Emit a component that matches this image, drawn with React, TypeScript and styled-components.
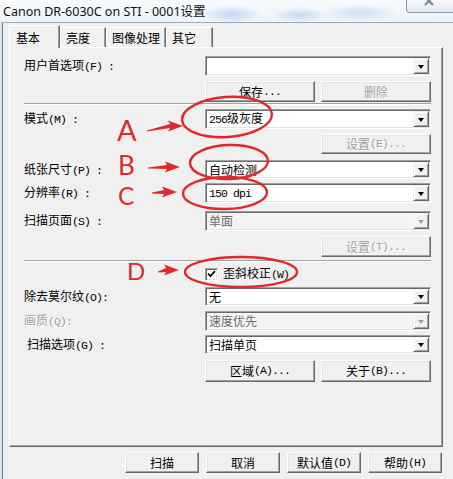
import styled, { createGlobalStyle } from 'styled-components'
import { ReactNode } from 'react'

const GlobalStyle = createGlobalStyle`
  *, *::before, *::after { box-sizing: border-box; }
  html, body { margin: 0; padding: 0; }
  body { width: 453px; height: 479px; overflow: hidden; background: #f0f0f0; }
`

const Window = styled.div`
  position: relative;
  width: 453px;
  height: 479px;
  display: flex;
  flex-direction: column;
  background: #d8e3ee;
  font-family: "Noto Sans CJK SC", "Liberation Sans", sans-serif;
  font-size: 12px;
  color: #000;
  overflow: hidden;
`

const TitleBar = styled.div`
  position: relative;
  flex: none;
  height: 22px;
  display: flex;
  align-items: center;
  padding: 0 0 2px 3px;
  background:
    radial-gradient(ellipse 30px 9px at 232px 14px, rgba(150, 190, 228, 0.55), transparent),
    radial-gradient(ellipse 28px 8px at 300px 15px, rgba(150, 190, 228, 0.5), transparent),
    radial-gradient(ellipse 40px 9px at 360px 13px, rgba(160, 198, 232, 0.45), transparent),
    linear-gradient(#f8fbfd, #eef4fa);
`

const Title = styled.span`
  font-family: "Noto Sans", "Noto Sans CJK SC", sans-serif;
  font-size: 12.5px;
  color: #111;
  white-space: nowrap;
`

const CloseButton = styled.div`
  position: absolute;
  top: 0;
  right: 0;
  width: 47px;
  height: 13px;
  border: 1px solid #8a9ab0;
  border-top: none;
  border-right: none;
  border-bottom-left-radius: 4px;
  background: linear-gradient(#f6f9fc, #e3eaf3);
  display: flex;
  justify-content: center;
  overflow: hidden;
`

const Client = styled.div`
  flex: 1;
  margin-left: 2px;
  border-left: 1px solid #6c7b90;
  border-top: 1px solid #9eabbd;
  background: #f0f0f0;
  display: flex;
  flex-direction: column;
  padding: 2px 10px 0 6px;
`

const TabStrip = styled.div`
  display: flex;
  align-items: flex-end;
  height: 22px;
  flex: none;
`

const Tab = styled.div<{ $active?: boolean; $w: number }>`
  position: relative;
  width: ${({ $w }) => $w}px;
  height: ${({ $active }) => ($active ? 23 : 20)}px;
  margin-bottom: ${({ $active }) => ($active ? -1 : 0)}px;
  z-index: ${({ $active }) => ($active ? 1 : 0)};
  background: #f0f0f0;
  border-top: 1px solid #fff;
  border-left: 1px solid #fff;
  border-right: 1px solid #696969;
  box-shadow: inset -1px 0 0 #a0a0a0;
  padding: ${({ $active }) => ($active ? '5px 0 0 6px' : '3px 0 0 5px')};
  line-height: 14px;
  white-space: nowrap;
`

const Panel = styled.div`
  flex: none;
  height: 400px;
  border-top: 1px solid #fff;
  border-left: 1px solid #fff;
  border-right: 1px solid #696969;
  border-bottom: 1px solid #696969;
  box-shadow: inset -1px -1px 0 #a0a0a0;
  padding: 0 11px 0 14px;
  display: flex;
  flex-direction: column;
`

const Row = styled.div<{ $mt: number; $h: number }>`
  flex: none;
  display: grid;
  grid-template-columns: 181px 226px;
  align-items: center;
  margin-top: ${({ $mt }) => $mt}px;
  height: ${({ $h }) => $h}px;
`

const Cell = styled.div<{ $end?: boolean }>`
  height: 100%;
  display: flex;
  align-items: center;
  gap: 6px;
  justify-content: ${({ $end }) => ($end ? 'flex-end' : 'flex-start')};
`

const Label = styled.div<{ $disabled?: boolean; $indent?: number }>`
  padding-left: ${({ $indent }) => $indent ?? 0}px;
  color: ${({ $disabled }) => ($disabled ? '#a0a0a0' : '#000')};
  text-shadow: ${({ $disabled }) => ($disabled ? '1px 1px 0 #fff' : 'none')};
  line-height: 14px;
  white-space: pre;
`

// SimSun-like half width latin: 6px per character
const Mono = styled.span`
  font-family: "Liberation Mono", "DejaVu Sans Mono", monospace;
  font-size: 11.5px;
  letter-spacing: -0.9px;
`

const Separator = styled.div<{ $mt: number }>`
  flex: none;
  margin-top: ${({ $mt }) => $mt}px;
  height: 2px;
  border-top: 1px solid #a0a0a0;
  border-bottom: 1px solid #fff;
`

const Combo = styled.div<{ $disabled?: boolean }>`
  width: 100%;
  height: 100%;
  display: flex;
  align-items: center;
  padding: 1px;
  border: 1px solid;
  border-color: #a0a0a0 #fff #fff #a0a0a0;
  box-shadow: inset 1px 1px 0 #696969, inset -1px -1px 0 #e3e3e3;
  background: ${({ $disabled }) => ($disabled ? '#f4f4f4' : '#fff')};
`

const ComboText = styled.div<{ $disabled?: boolean }>`
  flex: 1;
  padding-left: 2px;
  color: ${({ $disabled }) => ($disabled ? '#6d6d6d' : '#000')};
  line-height: 14px;
  white-space: pre;
`

const DropButton = styled.div`
  width: 16px;
  height: 100%;
  display: flex;
  align-items: center;
  justify-content: center;
  background: #f0f0f0;
  border: 1px solid;
  border-color: #f0f0f0 #696969 #696969 #f0f0f0;
  box-shadow: inset 1px 1px 0 #fff, inset -1px -1px 0 #a0a0a0;
`

const Arrow = styled.span<{ $disabled?: boolean }>`
  width: 0;
  height: 0;
  margin-top: 1px;
  border-left: 3.5px solid transparent;
  border-right: 3.5px solid transparent;
  border-top: 4px solid ${({ $disabled }) => ($disabled ? '#a0a0a0' : '#000')};
`

const Button = styled.div<{ $w: number; $disabled?: boolean }>`
  width: ${({ $w }) => $w}px;
  height: 100%;
  display: flex;
  align-items: center;
  justify-content: center;
  background: #f0f0f0;
  border: 1px solid;
  border-color: #fff #696969 #696969 #fff;
  box-shadow: inset -1px -1px 0 #a0a0a0, inset 1px 1px 0 #e3e3e3;
  color: ${({ $disabled }) => ($disabled ? '#a0a0a0' : '#000')};
  text-shadow: ${({ $disabled }) => ($disabled ? '1px 1px 0 #fff' : 'none')};
  line-height: 14px;
  white-space: pre;
`

const CheckRow = styled.label`
  display: flex;
  align-items: center;
  gap: 5px;
  line-height: 14px;
`

const CheckBox = styled.span`
  width: 13px;
  height: 13px;
  display: inline-flex;
  align-items: center;
  justify-content: center;
  background: #fff;
  border: 1px solid;
  border-color: #a0a0a0 #fff #fff #a0a0a0;
  box-shadow: inset 1px 1px 0 #696969, inset -1px -1px 0 #e3e3e3;
`

const Footer = styled.div`
  flex: none;
  display: flex;
  justify-content: flex-end;
  gap: 7px;
  height: 21px;
  margin-top: 5px;
  padding-right: 1px;
`

const Annotations = styled.svg`
  position: absolute;
  inset: 0;
  pointer-events: none;
`

const ComboBox = ({ children, disabled }: { children?: ReactNode; disabled?: boolean }) => (
  <Combo $disabled={disabled}>
    <ComboText $disabled={disabled}>{children}</ComboText>
    <DropButton>
      <Arrow $disabled={disabled} />
    </DropButton>
  </Combo>
)

const RED = '#e0282d'

// tapered brush arrow pointing right
const arrowPoints = (x1: number, y1: number, x2: number, y2: number) =>
  [
    [x1, y1 - 0.6],
    [x2 - 13, y2 - 2],
    [x2 - 15, y2 - 5.5],
    [x2, y2],
    [x2 - 15, y2 + 5.5],
    [x2 - 13, y2 + 2],
    [x1, y1 + 0.6],
  ]
    .map((p) => p.join(','))
    .join(' ')

const marks = [
  { letter: 'A', lx: 117, ly: 141, size: 29, ax: [147, 131, 183, 126], e: [227, 117, 45, 20, -4] },
  { letter: 'B', lx: 118, ly: 175, size: 26, ax: [148, 168, 180, 167], e: [229, 162, 39, 17, -2] },
  { letter: 'C', lx: 118, ly: 205, size: 24.5, ax: [152, 193, 177, 192], e: [225, 193, 42, 16, -1] },
  { letter: 'D', lx: 127, ly: 280, size: 24, ax: [158, 272, 179, 270], e: [241, 272, 56, 15, 0] },
]

export default function App() {
  return (
    <>
      <GlobalStyle />
      <Window>
        <TitleBar>
          <Title>Canon DR-6030C on STI - 0001设置</Title>
          <CloseButton>
            <svg width="14" height="10" viewBox="0 0 14 10">
              <path d="M2 -3 L10 5 M10 -3 L2 5" stroke="#7d8796" strokeWidth="2.2" fill="none" />
            </svg>
          </CloseButton>
        </TitleBar>
        <Client>
          <TabStrip>
            <Tab $active $w={51}>基本</Tab>
            <Tab $w={46}>亮度</Tab>
            <Tab $w={60}>图像处理</Tab>
            <Tab $w={47}>其它</Tab>
          </TabStrip>
          <Panel>
            <Row $mt={8} $h={20}>
              <Label>用户首选项<Mono>(F) :</Mono></Label>
              <ComboBox />
            </Row>
            <Row $mt={5} $h={21}>
              <span />
              <Cell>
                <Button $w={110}>保存<Mono>...</Mono></Button>
                <Button $w={110} $disabled>删除</Button>
              </Cell>
            </Row>
            <Separator $mt={1} />
            <Row $mt={4} $h={20}>
              <Label>模式<Mono>(M) :</Mono></Label>
              <ComboBox><Mono>256</Mono>级灰度</ComboBox>
            </Row>
            <Row $mt={5} $h={20}>
              <span />
              <Cell $end>
                <Button $w={110} $disabled>设置<Mono>(E)...</Mono></Button>
              </Cell>
            </Row>
            <Row $mt={6} $h={19}>
              <Label>纸张尺寸<Mono>(P) :</Mono></Label>
              <ComboBox>自动检测</ComboBox>
            </Row>
            <Row $mt={4} $h={20}>
              <Label>分辨率<Mono>(R) :</Mono></Label>
              <ComboBox><Mono>150 dpi</Mono></ComboBox>
            </Row>
            <Row $mt={8} $h={20}>
              <Label>扫描页面<Mono>(S) :</Mono></Label>
              <ComboBox disabled>单面</ComboBox>
            </Row>
            <Row $mt={5} $h={21}>
              <span />
              <Cell $end>
                <Button $w={110} $disabled>设置<Mono>(T)...</Mono></Button>
              </Cell>
            </Row>
            <Separator $mt={3} />
            <Row $mt={4} $h={16}>
              <span />
              <CheckRow>
                <CheckBox>
                  <svg width="9" height="8" viewBox="0 0 9 8">
                    <path d="M1 3.6 L3.4 6 L8 1.2" stroke="#000" strokeWidth="1.7" fill="none" />
                  </svg>
                </CheckBox>
                <span>歪斜校正<Mono>(W)</Mono></span>
              </CheckRow>
            </Row>
            <Row $mt={5} $h={19}>
              <Label>除去莫尔纹<Mono>(O):</Mono></Label>
              <ComboBox>无</ComboBox>
            </Row>
            <Row $mt={5} $h={20}>
              <Label $disabled>画质<Mono>(Q):</Mono></Label>
              <ComboBox disabled>速度优先</ComboBox>
            </Row>
            <Row $mt={4} $h={19}>
              <Label $indent={3}>扫描选项<Mono>(G) :</Mono></Label>
              <ComboBox>扫描单页</ComboBox>
            </Row>
            <Row $mt={6} $h={22}>
              <span />
              <Cell>
                <Button $w={110}>区域<Mono>(A)...</Mono></Button>
                <Button $w={110}>关于<Mono>(B)...</Mono></Button>
              </Cell>
            </Row>
          </Panel>
          <Footer>
            <Button $w={74}>扫描</Button>
            <Button $w={74}>取消</Button>
            <Button $w={74}>默认值<Mono>(D)</Mono></Button>
            <Button $w={74}>帮助<Mono>(H)</Mono></Button>
          </Footer>
        </Client>
        <Annotations width="453" height="479" viewBox="0 0 453 479">
          {marks.map((m) => (
            <g key={m.letter}>
              <text
                x={m.lx}
                y={m.ly}
                fill={RED}
                fontFamily='Lato, "Liberation Sans", sans-serif'
                fontSize={m.size}
              >
                {m.letter}
              </text>
              <polygon points={arrowPoints(m.ax[0], m.ax[1], m.ax[2], m.ax[3])} fill={RED} />
              <ellipse
                cx={m.e[0]}
                cy={m.e[1]}
                rx={m.e[2]}
                ry={m.e[3]}
                transform={`rotate(${m.e[4]} ${m.e[0]} ${m.e[1]})`}
                fill="none"
                stroke={RED}
                strokeWidth={2.4}
              />
            </g>
          ))}
        </Annotations>
      </Window>
    </>
  )
}
